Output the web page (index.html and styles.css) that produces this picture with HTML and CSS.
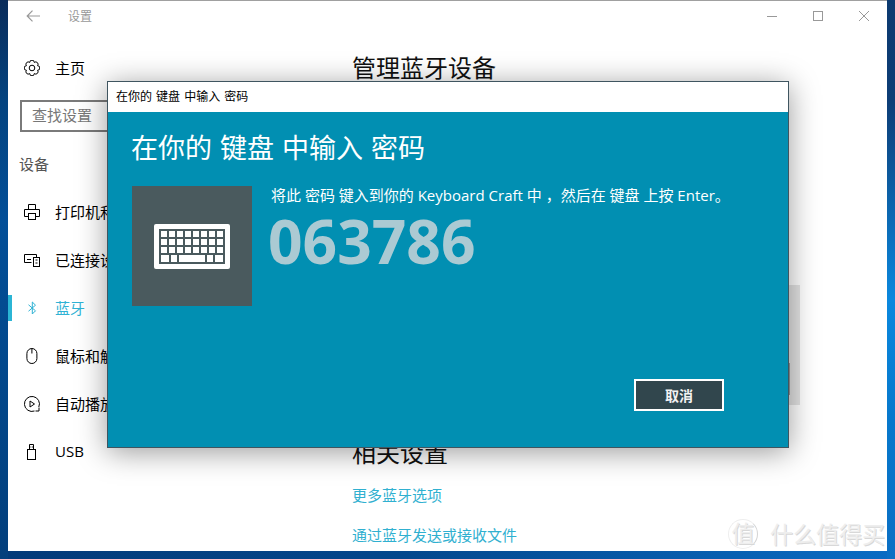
FILE: index.html
```html
<!DOCTYPE html>
<html lang="zh-CN">
<head>
    <meta charset="UTF-8">
    <title>设置</title>
    <link rel="stylesheet" href="styles.css">
</head>
<body>
    <div class="window">
        <div class="titlebar">
            <svg class="back-icon" width="14" height="12" viewBox="0 0 14 12"><path d="M6.5.7 1.2 6l5.3 5.300M1.2 6H14"/></svg>
            <span class="app-title">设置</span>
            <div class="controls">
                <svg width="46" height="12" viewBox="0 0 46 12"><path d="M18 6.500h10"/></svg>
                <svg width="46" height="12" viewBox="0 0 46 12"><rect x="18.500" y="1.500" width="9" height="9"/></svg>
                <svg width="46" height="12" viewBox="0 0 46 12"><path d="M18 1l10 10M28 1 18 11"/></svg>
            </div>
        </div>
        <div class="layout">
            <aside class="sidebar">
                <a class="nav-item">
                    <svg class="icon" viewBox="0 0 16 16"><path d="M13.540 10.300A2.300 2.300 0 0 1 10.300 13.540 2.300 2.300 0 0 1 5.700 13.540 2.300 2.300 0 0 1 2.460 10.300 2.300 2.300 0 0 1 2.460 5.700 2.300 2.300 0 0 1 5.700 2.460 2.300 2.300 0 0 1 10.300 2.460 2.300 2.300 0 0 1 13.540 5.700 2.300 2.300 0 0 1 13.540 10.300Z"/><circle cx="8" cy="8" r="2.800"/></svg>
                    主页
                </a>
                <div class="search">查找设置</div>
                <div class="section-label">设备</div>
                <a class="nav-item">
                    <svg class="icon" viewBox="0 0 16 16"><path d="M4.500 5V.5h7V5M4.500 12.500h-4v-7h15v7h-4"/><rect x="4.500" y="9.500" width="7" height="6"/></svg>
                    打印机和扫描仪
                </a>
                <a class="nav-item">
                    <svg class="icon" viewBox="0 0 16 16"><path d="M7.500 10.500H.5v-8h12v2.500M3 7.500h4"/><rect x="9.500" y="5.500" width="6" height="9"/><path d="M11.500 8h2M11.500 11h2"/></svg>
                    已连接设备
                </a>
                <a class="nav-item active">
                    <svg class="icon" viewBox="0 0 16 16"><path d="M4.500 4.800 11.500 10.800 8.300 14V2L11.500 5.200 4.500 11.200"/></svg>
                    蓝牙
                </a>
                <a class="nav-item">
                    <svg class="icon" viewBox="0 0 16 16"><rect x="2.900" y=".500" width="10" height="15" rx="5" ry="5"/><path d="M7.900.500v5"/></svg>
                    鼠标和触摸板
                </a>
                <a class="nav-item">
                    <svg class="icon" viewBox="0 0 16 16"><path d="M10.500 15A7.500 7.500 0 1 1 14.800 11M15 11.500v3.500h-3.500"/><path d="M6 5l4.500 3L6 11Z"/></svg>
                    自动播放
                </a>
                <a class="nav-item">
                    <svg class="icon" viewBox="0 0 16 16"><rect x="3.500" y="5.500" width="8" height="10"/><path d="M5.500 5.500V.5h4v5M6.500 3h.8M8 3h.8"/></svg>
                    USB
                </a>
            </aside>
            <main class="content">
                <h1>管理蓝牙设备</h1>
                <div class="device-row"><span class="device-btn"></span></div>
                <h2>相关设置</h2>
                <a class="link">更多蓝牙选项</a>
                <a class="link">通过蓝牙发送或接收文件</a>
            </main>
        </div>

        <div class="dialog">
            <div class="dialog-title">在你的 键盘 中输入 密码</div>
            <div class="dialog-body">
                <div class="dialog-heading">在你的 键盘 中输入 密码</div>
                <div class="dialog-row">
                    <div class="keyboard-tile">
                        <svg width="76" height="45" viewBox="0 0 76 45">
                            <defs>
                                <pattern id="keys" x="7" y="7" width="8" height="8" patternUnits="userSpaceOnUse">
                                    <rect width="6" height="6" fill="#fff"/>
                                </pattern>
                            </defs>
                            <rect width="76" height="45" rx="2" fill="#fff"/>
                            <rect x="5" y="5" width="66" height="35" fill="#4a5a5e"/>
                            <rect x="7" y="7" width="62" height="22" fill="url(#keys)"/>
                            <path fill="#fff" d="M7 31h8v7H7zM17 31h6v7h-6zM25 31h26v7H25zM53 31h6v7h-6zM61 31h8v7h-8z"/>
                        </svg>
                    </div>
                    <div class="pin-info">
                        <p>将此 密码 键入到你的 Keyboard Craft 中 ，然后在 键盘 上按 Enter。</p>
                        <div class="pin">063786</div>
                    </div>
                </div>
                <div class="dialog-actions">
                    <button>取消</button>
                </div>
            </div>
        </div>

        <div class="watermark">
            <span class="wm-badge">值</span>
            <span>什么值得买</span>
        </div>
    </div>
</body>
</html>
```

FILE: styles.css
```css
body, html {
    margin: 0;
    padding: 0;
    height: 100%;
    overflow: hidden;
    font-family: "Open Sans", "Noto Sans CJK SC", sans-serif;
}
body {
    background-color: #0a5fae;
    background-image:
        linear-gradient(180deg, #0c3a70 0, #0d3d76 100px, #0a88de 300px, #0678cc 420px, #0b6fc4 100%),
        linear-gradient(180deg, #0a2c5a 0, #04437f 100px, #034f98 220px, #033f7c 100%),
        linear-gradient(90deg, #033a78 0, #04478c 400px, #0a6cc4 100%);
    background-size: 8px 100%, 8px 100%, 100% 8px;
    background-position: right top, left top, left bottom;
    background-repeat: no-repeat;
}
.window {
    position: relative;
    width: 879px;
    height: 551px;
    margin-left: 8px;
    box-sizing: border-box;
    background-color: #fff;
    border-top: 1px solid #a0a0a0;
    overflow: hidden;
}
.titlebar {
    display: flex;
    align-items: center;
    height: 30px;
    padding-left: 18px;
}
.back-icon {
    fill: none;
    stroke: #999;
    stroke-width: 1.2;
}
.app-title {
    margin-left: 28px;
    font-size: 12px;
    color: #999;
}
.controls {
    display: flex;
    margin-left: auto;
}
.controls svg {
    fill: none;
    stroke: #999;
    stroke-width: 1;
}
.layout {
    display: grid;
    grid-template-columns: 344px 1fr;
}
.sidebar {
    padding-top: 13px;
}
.nav-item {
    display: flex;
    align-items: center;
    gap: 15px;
    height: 48px;
    box-sizing: border-box;
    padding: 0 0 2px 12px;
    border-left: 4px solid transparent;
    font-size: 15px;
    color: #000;
    white-space: nowrap;
}
.nav-item.active {
    border-image: linear-gradient(180deg, transparent 12px, #2bb5d5 12px, #2bb5d5 36px, transparent 36px) 1;
    color: #2fb2d4;
}
.icon {
    width: 16px;
    height: 16px;
    flex: none;
    margin-top: 2px;
    fill: none;
    stroke: #000;
    stroke-width: 1;
}
.active .icon {
    stroke: #2fb2d4;
}
.search {
    height: 28px;
    margin: 8px 0 0 12px;
    padding-left: 10px;
    border: 2px solid #7a7a7a;
    font-size: 15px;
    line-height: 26px;
    color: #777;
}
.section-label {
    margin: 21px 0 13px 11px;
    font-size: 15px;
    line-height: 22px;
    color: #555;
}
.content {
    display: flex;
    flex-direction: column;
    align-items: flex-start;
}
h1, h2 {
    margin: 0;
    font-size: 24px;
    font-weight: 400;
    line-height: 34px;
    color: #111;
}
h1 {
    margin-top: 20px;
}
.device-row {
    display: flex;
    justify-content: flex-end;
    align-items: flex-end;
    width: 448px;
    height: 120px;
    margin-top: 200px;
    padding: 0 10px 10px 0;
    box-sizing: border-box;
    background-color: #e4e4e4;
}
.device-btn {
    width: 100px;
    height: 32px;
    background-color: #999;
}
h2 {
    margin-top: 31px;
}
.link {
    margin-top: 14px;
    font-size: 15px;
    line-height: 22px;
    color: #30b0d0;
}
.link + .link {
    margin-top: 18px;
}
.dialog {
    position: absolute;
    left: 99px;
    top: 80px;
    display: flex;
    flex-direction: column;
    width: 682px;
    height: 367px;
    box-sizing: border-box;
    border: 1px solid #3f5560;
    box-shadow: 0 4px 28px rgba(0,0,0,0.4);
}
.dialog-title {
    height: 30px;
    padding-left: 8px;
    background-color: #fff;
    font-size: 12px;
    line-height: 30px;
    word-spacing: 1px;
    color: #000;
}
.dialog-body {
    display: flex;
    flex: 1;
    flex-direction: column;
    padding: 16px 64px 36px 24px;
    background-color: #018fb2;
    color: #fff;
}
.dialog-heading {
    margin-left: -1px;
    font-size: 27px;
    line-height: 40px;
    word-spacing: 1px;
}
.dialog-row {
    display: flex;
    gap: 19px;
    margin-top: 18px;
}
.keyboard-tile {
    display: flex;
    align-items: center;
    justify-content: center;
    width: 120px;
    height: 120px;
    flex: none;
    background-color: #4a5a5e;
}
.pin-info p {
    margin: 0;
    font-size: 15px;
    line-height: 18px;
    white-space: nowrap;
}
.pin {
    margin-left: -3px;
    font-size: 60.500px;
    font-weight: 700;
    line-height: 74px;
    color: #abcad3;
}
.dialog-actions {
    display: flex;
    justify-content: flex-end;
    margin-top: auto;
}
button {
    width: 90px;
    height: 32px;
    padding: 0;
    background-color: #31464d;
    border: 2px solid #fff;
    font-family: inherit;
    font-size: 14px;
    font-weight: 700;
    color: #f2f2f2;
}
.watermark {
    position: absolute;
    right: 2px;
    bottom: 2px;
    display: flex;
    align-items: center;
    gap: 12px;
    font-size: 23px;
    line-height: 30px;
    color: #eeeeee;
    text-shadow: 1px 1px 0 #d8d8d8;
}
.wm-badge {
    width: 28px;
    height: 28px;
    border: 1px solid #eee;
    border-right-color: #d4d4d4;
    border-radius: 50%;
    text-align: center;
    line-height: 27px;
}
```
